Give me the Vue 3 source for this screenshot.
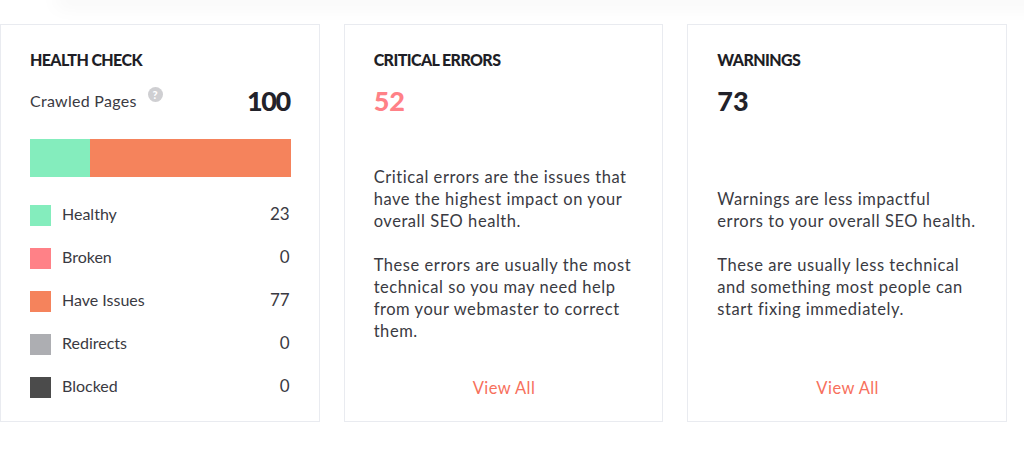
<script setup>
const legend = [
  { label: 'Healthy', value: 23, color: '#84edbd' },
  { label: 'Broken', value: 0, color: '#ff8187' },
  { label: 'Have Issues', value: 77, color: '#f5835c' },
  { label: 'Redirects', value: 0, color: '#adaeb2' },
  { label: 'Blocked', value: 0, color: '#4b4b4b' }
]
</script>

<template>
  <div class="page">
    <div class="topbar"></div>
    <div class="cards">
      <section class="card">
        <h2 class="title">HEALTH CHECK</h2>
        <div class="crawled">
          <span class="crawled-label">Crawled Pages</span>
          <span class="help">?</span>
          <span class="big total">100</span>
        </div>
        <div class="bar">
          <div class="bar-good"></div>
          <div class="bar-bad"></div>
        </div>
        <ul class="legend">
          <li v-for="item in legend" :key="item.label" class="legend-row">
            <span class="swatch" :style="{ background: item.color }"></span>
            <span class="legend-label">{{ item.label }}</span>
            <span class="legend-value">{{ item.value }}</span>
          </li>
        </ul>
      </section>

      <section class="card column">
        <h2 class="title">CRITICAL ERRORS</h2>
        <div class="big red">52</div>
        <div class="desc desc-critical">
          <p>Critical errors are the issues that have the highest impact on your overall SEO health.</p>
          <p>These errors are usually the most technical so you may need help from your webmaster to correct them.</p>
        </div>
        <a class="view">View All</a>
      </section>

      <section class="card column">
        <h2 class="title">WARNINGS</h2>
        <div class="big">73</div>
        <div class="desc desc-warnings">
          <p>Warnings are less impactful errors to your overall SEO health.</p>
          <p>These are usually less technical and something most people can start fixing immediately.</p>
        </div>
        <a class="view">View All</a>
      </section>
    </div>
  </div>
</template>

<style scoped>
.page {
  width: 1024px;
  height: 454px;
  overflow: hidden;
  background: #fff;
  font-family: Lato, "Open Sans", sans-serif;
  color: #2b2b33;
}
.topbar {
  height: 0;
  margin: 0 -30px 0 62px;
  box-shadow: 0 0 20px 6px rgba(0, 0, 0, 0.05);
}
.cards {
  width: 1007px;
  margin-top: 24px;
  display: grid;
  grid-template-columns: repeat(3, 1fr);
  gap: 24px;
}
.card {
  box-sizing: border-box;
  height: 398px;
  padding: 25px 28px 0 29px;
  background: #fff;
  border: 1px solid #e9ebf0;
}
.column {
  display: flex;
  flex-direction: column;
}
.title {
  margin: 0;
  font-size: 16px;
  line-height: 20px;
  font-weight: 900;
  color: #1e1e26;
  letter-spacing: -0.6px;
}
.crawled {
  display: flex;
  align-items: center;
  margin-top: 16px;
  height: 30px;
}
.crawled-label {
  font-size: 16px;
  font-weight: 400;
  letter-spacing: 0.28px;
  color: #3a3a42;
  margin-top: -2px;
}
.help {
  width: 15px;
  height: 15px;
  margin: -14px 0 0 11px;
  border-radius: 50%;
  background: #cfcfd2;
  color: #fff;
  font-size: 11px;
  font-weight: 900;
  line-height: 15px;
  text-align: center;
}
.big {
  font-size: 27px;
  line-height: 30px;
  font-weight: 900;
  color: #22222a;
}
.column .big {
  margin-top: 16px;
}
.total {
  margin-left: auto;
  margin-right: 1px;
  letter-spacing: -1.4px;
}
.red {
  color: #ff8187;
}
.bar {
  display: flex;
  height: 38px;
  margin-top: 23px;
}
.bar-good {
  width: 23%;
  background: #84edbd;
}
.bar-bad {
  flex: 1;
  background: #f5835c;
}
.legend {
  list-style: none;
  margin: 28px 0 0;
  padding: 0;
  display: flex;
  flex-direction: column;
  gap: 22px;
}
.legend-row {
  display: flex;
  align-items: center;
  height: 21px;
  font-size: 16px;
  color: #3a3a42;
}
.swatch {
  width: 21px;
  height: 21px;
  margin-right: 11px;
}
.legend-label {
  margin-bottom: 4px;
}
.legend-value {
  margin-left: auto;
  margin-right: 1px;
  margin-bottom: 4px;
  font-size: 17px;
}
.desc {
  font-size: 16.5px;
  line-height: 22px;
  color: #3a3a42;
  letter-spacing: 0.55px;
}
.desc p {
  margin: 0 0 22px;
}
.desc-critical {
  margin-top: 50px;
}
.desc-warnings {
  margin-top: 72px;
}
.view {
  margin-top: auto;
  margin-bottom: 22px;
  text-align: center;
  font-size: 16.5px;
  line-height: 22px;
  color: #f7705c;
  letter-spacing: 0.45px;
}
</style>
